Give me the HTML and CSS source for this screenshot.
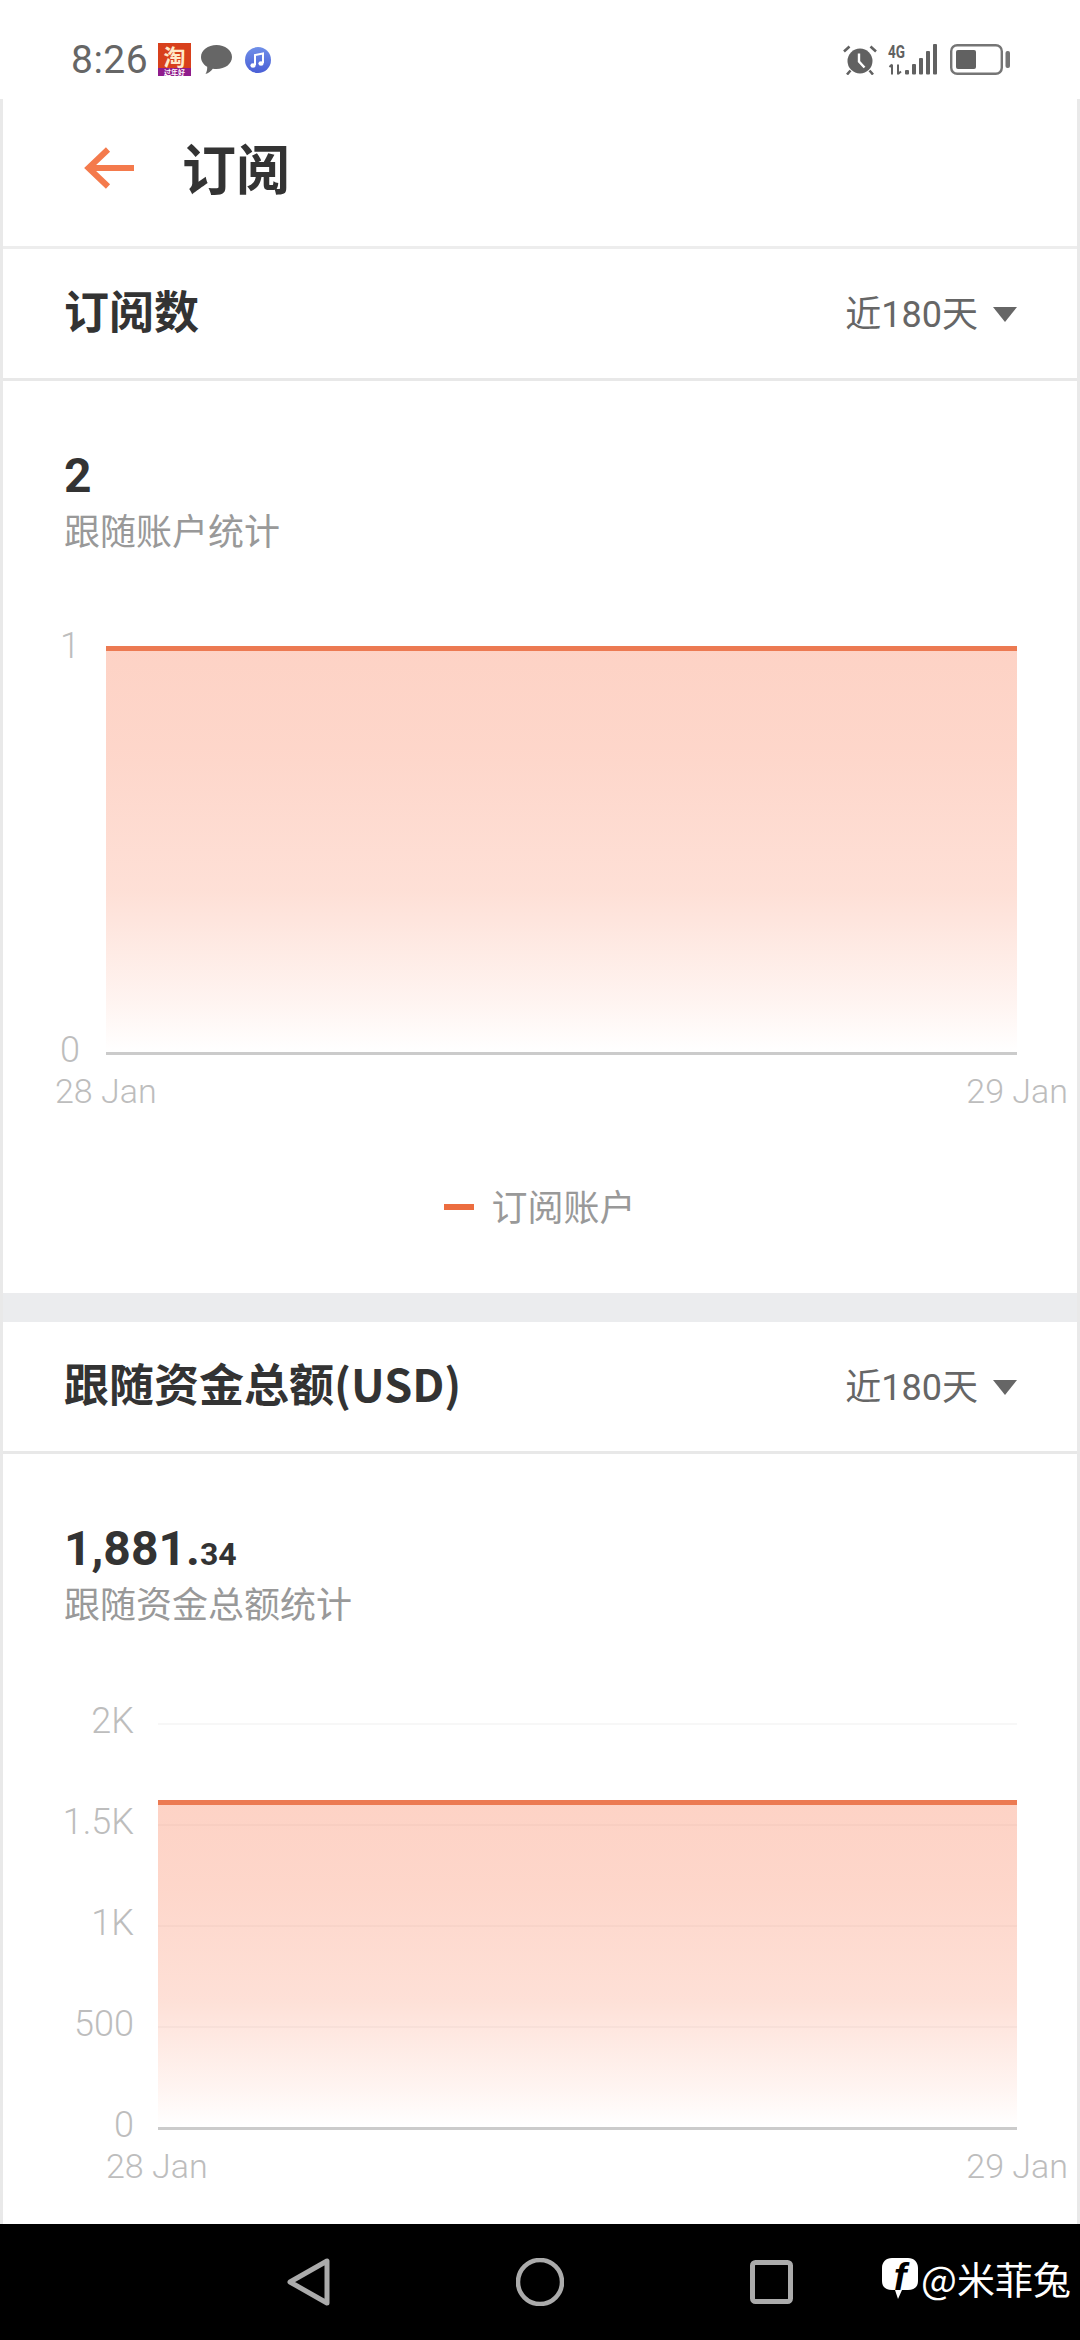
FILE: index.html
```html
<!DOCTYPE html>
<html lang="zh">
<head>
<meta charset="utf-8">
<title>订阅</title>
<link rel="stylesheet" href="styles.css">
</head>
<body>
<div class="page">
  <div class="statusbar">
    <div class="status-left">
      <span class="clock">8:26</span>
      <svg class="ic-taobao" viewBox="0 0 33 33">
        <rect width="33" height="33" fill="#d8401c"/>
        <rect y="25" width="33" height="8" fill="#8f1c8c"/>
        <text class="taobao-main" x="16.5" y="22" text-anchor="middle">淘</text>
        <text class="taobao-sub" x="16.5" y="31.500" text-anchor="middle">过年好</text>
      </svg>
      <svg class="ic-bubble" viewBox="0 0 31 29"><path fill="#666" d="M15.5 0C24 0 31 5 31 12s-7 12-15.500 12c-1.300 0-2.500-.1-3.700-.3C10 26 7.500 28.500 4.500 29c1.200-2 1.800-4 1.700-7.200C2.400 19.600 0 16.100 0 12 0 5 7 0 15.500 0z"/></svg>
      <svg class="ic-music" viewBox="0 0 26 26">
        <defs><linearGradient id="mg" x1="0" y1="0" x2="0" y2="1"><stop offset="0" stop-color="#6f8fe8"/><stop offset="1" stop-color="#4a5fd6"/></linearGradient></defs>
        <circle cx="13" cy="13" r="13" fill="url(#mg)"/>
        <path fill="none" stroke="#fff" stroke-width="2" d="M10 18V8l8-1.500V16"/>
        <ellipse cx="8" cy="18.500" rx="2.600" ry="2.200" fill="#fff"/>
        <ellipse cx="16" cy="16.500" rx="2.600" ry="2.200" fill="#fff"/>
      </svg>
    </div>
    <div class="status-right">
      <svg class="ic-alarm" viewBox="0 0 34 30">
        <circle cx="17" cy="16" r="12.500" fill="#616161"/>
        <path fill="none" stroke="#fff" stroke-width="2.400" d="M16 8.500V16.500l5.500 6"/>
        <path fill="none" stroke="#616161" stroke-width="2.600" d="M1 6.500 6.500 1.500M33 6.500 27.500 1.500M7.500 25.500 4 29.500M26.500 25.500 30 29.500"/>
      </svg>
      <svg class="ic-signal" viewBox="0 0 50 31">
        <text class="net-type" x="0" y="14" textLength="17" lengthAdjust="spacingAndGlyphs">4G</text>
        <path fill="none" stroke="#616161" stroke-width="2" d="M4 20.500v10M1.500 23l2.500-2.500M10 20.500v10M10 30l3-2.500"/>
        <rect x="17" y="26" width="4" height="4.500" rx="1" fill="#616161"/>
        <rect x="24" y="20" width="4" height="10.500" rx="1" fill="#616161"/>
        <rect x="31" y="14" width="4" height="16.500" rx="1" fill="#616161"/>
        <rect x="38" y="7" width="4" height="23.500" rx="1" fill="#616161"/>
        <rect x="45" y="0" width="4" height="30.500" rx="1" fill="#616161"/>
      </svg>
      <svg class="ic-battery" viewBox="0 0 60 31">
        <rect x="1.200" y="1.200" width="50.600" height="28.600" rx="6" fill="none" stroke="#757575" stroke-width="2.400"/>
        <rect x="6" y="6" width="20" height="19" rx="2" fill="#616161"/>
        <rect x="55.500" y="7" width="4.500" height="17" rx="2" fill="#757575"/>
      </svg>
    </div>
  </div>

  <main class="frame">
    <header class="appbar">
      <svg class="ic-back" viewBox="0 0 50 42"><path fill="none" stroke="#f47a4c" stroke-width="6" d="M50 21H5M24 2.500 4.500 21 24 39.500"/></svg>
      <h1 class="app-title">订阅</h1>
    </header>

    <section class="card">
      <div class="section-head">
        <h2 class="section-title">订阅数</h2>
        <div class="range"><span>近180天</span><i class="caret"></i></div>
      </div>
      <div class="stat">
        <div class="stat-num">2</div>
        <div class="stat-sub">跟随账户统计</div>
      </div>
      <div class="chart chart-small">
        <div class="plot">
          <div class="tick"><span class="tick-label">1</span><span class="tick-line"></span></div>
          <div class="tick tick-axis"><span class="tick-label">0</span><span class="tick-line"></span></div>
          <div class="area"></div>
        </div>
        <div class="xaxis"><span>28 Jan</span><span>29 Jan</span></div>
      </div>
      <div class="legend"><i class="legend-dash"></i><span>订阅账户</span></div>
    </section>

    <div class="band"></div>

    <section class="card">
      <div class="section-head">
        <h2 class="section-title">跟随资金总额(USD)</h2>
        <div class="range"><span>近180天</span><i class="caret"></i></div>
      </div>
      <div class="stat">
        <div class="stat-num">1,881.<small class="stat-dec">34</small></div>
        <div class="stat-sub">跟随资金总额统计</div>
      </div>
      <div class="chart chart-wide">
        <div class="plot">
          <div class="tick"><span class="tick-label">2K</span><span class="tick-line"></span></div>
          <div class="tick"><span class="tick-label">1.5K</span><span class="tick-line"></span></div>
          <div class="tick"><span class="tick-label">1K</span><span class="tick-line"></span></div>
          <div class="tick"><span class="tick-label">500</span><span class="tick-line"></span></div>
          <div class="tick tick-axis"><span class="tick-label">0</span><span class="tick-line"></span></div>
          <div class="area"></div>
        </div>
        <div class="xaxis"><span>28 Jan</span><span>29 Jan</span></div>
      </div>
    </section>
  </main>

  <nav class="navbar">
    <svg class="nav-back" viewBox="0 0 43 48"><path fill="none" stroke="#ababab" stroke-width="5" stroke-linejoin="round" d="M40 3V45L3 24z"/></svg>
    <svg class="nav-home" viewBox="0 0 48 48"><circle cx="24" cy="24" r="22" fill="none" stroke="#ababab" stroke-width="4.500"/></svg>
    <svg class="nav-recent" viewBox="0 0 43 44"><rect x="2.500" y="2.500" width="38" height="39" rx="3" fill="none" stroke="#ababab" stroke-width="5"/></svg>
    <div class="watermark">
      <svg class="fb-logo" viewBox="0 0 36 42">
        <path fill="#fff" d="M10 1h16c6 0 10 4 10 10v13c0 6-4 9-10 9h-6l-4 9-3-9h-3C4 33 0 30 0 24V11C0 5 4 1 10 1z"/>
        <text class="fb-f" x="18" y="33" text-anchor="middle">f</text>
      </svg>
      <span>@米菲兔</span>
    </div>
  </nav>
</div>
</body>
</html>
```
FILE: styles.css
```css
* { box-sizing: border-box; }
html, body { margin: 0; padding: 0; background: #fff; }
body { font-family: Roboto, "Noto Sans CJK SC", sans-serif; }
h1, h2 { margin: 0; }

.page { width: 1080px; height: 2340px; display: flex; flex-direction: column; overflow: hidden; }

.statusbar { height: 99px; flex: none; display: flex; justify-content: space-between; align-items: center; padding: 20px 70px 0 71px; background: #fff; }
.status-left { display: flex; align-items: center; }
.status-right { display: flex; align-items: center; }
.clock { font: 400 39px/40px Roboto, sans-serif; color: #666; letter-spacing: .5px; width: 87px; }
.ic-taobao { width: 33px; height: 33px; overflow: visible; }
.taobao-main { font: 700 22px "Noto Sans CJK SC", sans-serif; fill: #ffe9c9; }
.taobao-sub { font: 700 7px "Noto Sans CJK SC", sans-serif; fill: #fff; }
.ic-bubble { width: 31px; height: 29px; margin-left: 10px; }
.ic-music { width: 26px; height: 26px; margin-left: 13px; }
.ic-alarm { width: 34px; height: 30px; }
.ic-signal { width: 50px; height: 31px; margin-left: 11px; overflow: visible; }
.net-type { font: 700 18px Roboto, sans-serif; fill: #616161; }
.ic-battery { width: 60px; height: 31px; margin-left: 12px; }

.frame { flex: none; height: 2125px; border-left: 3px solid #e9e9e9; border-right: 3px solid #e9e9e9; background: #fff; overflow: hidden; }

.appbar { height: 150px; display: flex; align-items: center; padding-left: 81px; border-bottom: 3px solid #ededed; }
.ic-back { width: 50px; height: 42px; margin-top: -9px; }
.app-title { font: 700 54px/60px "Noto Sans CJK SC", sans-serif; color: #333; margin: -12px 0 0 48px; }

.section-head { height: 132px; display: flex; justify-content: space-between; align-items: center; padding: 0 60px 0 61px; border-bottom: 3px solid #e8e8e8; }
.section-title { font: 700 45px/56px "Noto Sans CJK SC", Roboto, sans-serif; color: #333; margin-top: -8px; }
.range { display: flex; align-items: center; font: 400 36px/44px Roboto, "Noto Sans CJK SC", sans-serif; color: #666; margin-top: 2px; }
.caret { width: 0; height: 0; border-left: 12px solid transparent; border-right: 12px solid transparent; border-top: 15px solid #666; margin-left: 15px; }

.stat { padding: 67px 0 0 61px; }
.stat-num { font: 700 48px/56px Roboto, sans-serif; color: #333; height: 56px; }
.stat-dec { font-size: 32px; font-weight: 700; line-height: 1; }
.stat-sub { font: 400 36px/50px "Noto Sans CJK SC", sans-serif; color: #999; }

.chart { margin-top: 96px; }
.chart-small { margin-top: 94px; }
.plot { position: relative; display: flex; flex-direction: column; justify-content: space-between; padding-right: 60px; }
.chart-small .plot { height: 406px; --label-w: 77px; --label-gap: 26px; }
.chart-wide .plot { height: 406px; --label-w: 131px; --label-gap: 24px; }
.tick { height: 2px; display: flex; align-items: center; }
.tick-label { width: var(--label-w); margin-right: var(--label-gap); text-align: right; font: 300 36px/44px Roboto, sans-serif; color: #bdbdbd; margin-bottom: 6px; flex: none; }
.tick-line { flex: 1; height: 2px; background: #f7f7f7; }
.tick-axis { position: relative; z-index: 2; }
.tick-axis .tick-line { height: 3px; background: #cbcbcb; }
.area { position: absolute; top: -2px; bottom: 2px; left: calc(var(--label-w) + var(--label-gap)); right: 60px; border-top: 5px solid #ec7a52; background: linear-gradient(to bottom, rgba(250, 120, 80, .33), rgba(250, 120, 80, .30) 25%, rgba(250, 120, 80, .23) 60%, rgba(250, 120, 80, .08) 88%, rgba(250, 120, 80, 0)); }
.chart-wide .area { top: 77px; }

.xaxis { display: flex; justify-content: space-between; padding-right: 9px; font: 300 34px/44px Roboto, sans-serif; color: #bdbdbd; margin-top: 15px; }
.chart-small .xaxis { padding-left: 52px; }
.chart-wide .xaxis { padding-left: 103px; }

.legend { display: flex; justify-content: center; align-items: center; gap: 17px; margin-top: 62px; height: 60px; font: 400 36px/50px "Noto Sans CJK SC", sans-serif; color: #999; }
.legend-dash { width: 30px; height: 6px; background: #ec6d3f; margin-top: 4px; }

.band { height: 29px; background: #ebecee; margin-top: 58px; }

.navbar { position: relative; flex: 1; background: #000; display: flex; align-items: center; justify-content: center; gap: 186px; }
.nav-back { width: 43px; height: 48px; }
.nav-home { width: 48px; height: 48px; }
.nav-recent { width: 43px; height: 44px; }
.watermark { position: absolute; right: 9px; top: 32px; display: flex; align-items: center; gap: 3px; font: 400 38px/44px "Noto Sans CJK SC", sans-serif; color: #fff; }
.fb-logo { width: 36px; height: 42px; }
.fb-f { font: italic 700 38px "Liberation Sans", sans-serif; fill: #000; }
```
